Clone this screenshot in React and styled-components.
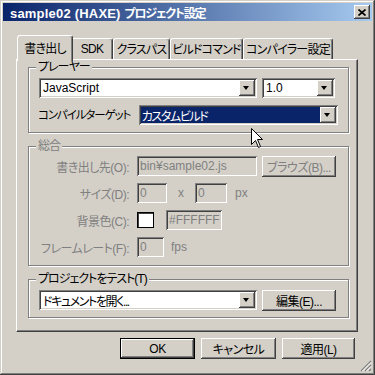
import React from "react";
import styled, { createGlobalStyle } from "styled-components";

const GlobalStyle = createGlobalStyle`
  html, body {
    margin: 0;
    padding: 0;
    background: #d4d0c8;
  }
  body {
    font-family: "Liberation Sans", "Noto Sans CJK JP", sans-serif;
    font-size: 12px;
    font-feature-settings: "palt" 1;
    color: #000;
  }
  * {
    box-sizing: border-box;
  }
`;

const raised = `
  box-shadow: inset -1px -1px #404040, inset 1px 1px #ffffff,
    inset -2px -2px #808080, inset 2px 2px #d4d0c8;
`;

const sunken = `
  box-shadow: inset 1px 1px #808080, inset -1px -1px #ffffff,
    inset 2px 2px #404040, inset -2px -2px #d4d0c8;
`;

const tabs = [
  { label: "書き出し", width: 56, active: true },
  { label: "SDK", width: 42 },
  { label: "クラスパス", width: 57 },
  { label: "ビルドコマンド", width: 73 },
  { label: "コンパイラー設定", width: 90 },
];

const App = () => {
  return (
    <>
      <GlobalStyle />
      <Window>
        <TitleBar>
          <Title>
            sample02 (HAXE) <TitleKana>プロジェクト設定</TitleKana>
          </Title>
          <CloseButton>
            <svg width="8" height="7" viewBox="0 0 8 7">
              <path d="M0.5 0.5 L7.5 6.5 M7.5 0.5 L0.5 6.5" stroke="#000" strokeWidth="1.7" />
            </svg>
          </CloseButton>
        </TitleBar>
        <Content>
          <TabStrip>
            {tabs.map((t) => (
              <Tab key={t.label} $active={t.active} $width={t.width}>
                {t.label}
              </Tab>
            ))}
          </TabStrip>
          <Panel>
            <Group>
              <Legend>プレーヤー</Legend>
              <Stack>
                <Row>
                  <Combo $width={218}>
                    <ComboText>JavaScript</ComboText>
                    <DropButton />
                  </Combo>
                  <Combo $width={73}>
                    <ComboText>1.0</ComboText>
                    <DropButton />
                  </Combo>
                </Row>
                <Row>
                  <RowLabel>コンパイルターゲット</RowLabel>
                  <Combo $width={200}>
                    <ComboText $selected $jp>カスタムビルド</ComboText>
                    <DropButton />
                  </Combo>
                </Row>
              </Stack>
            </Group>

            <Group>
              <Legend $disabled>総合</Legend>
              <FormGrid>
                <FieldLabel>書き出し先(O):</FieldLabel>
                <Row>
                  <Field $width={120}>bin¥sample02.js</Field>
                  <Button $width={74} $disabled>ブラウズ(B)...</Button>
                </Row>

                <FieldLabel>サイズ(D):</FieldLabel>
                <Row $gap={0}>
                  <Field $width={30}>0</Field>
                  <Unit $pad={11}>x</Unit>
                  <Field $width={32}>0</Field>
                  <Unit $pad={8}>px</Unit>
                </Row>

                <FieldLabel>背景色(C):</FieldLabel>
                <Row $gap={12}>
                  <Swatch />
                  <Field $width={56}>#FFFFFF</Field>
                </Row>

                <FieldLabel>フレームレート(F):</FieldLabel>
                <Row $gap={7}>
                  <Field $width={27}>0</Field>
                  <Unit>fps</Unit>
                </Row>
              </FormGrid>
            </Group>

            <Group>
              <Legend>プロジェクトをテスト(T)</Legend>
              <Row>
                <Combo $width={218}>
                  <ComboText $jp>ドキュメントを開く...</ComboText>
                  <DropButton />
                </Combo>
                <Button $width={74}>編集(E)...</Button>
              </Row>
            </Group>
          </Panel>

          <ButtonBar>
            <Button $width={75} $default>OK</Button>
            <Button $width={75}>キャンセル</Button>
            <Button $width={73}>適用(L)</Button>
          </ButtonBar>
        </Content>

        <SizeGrip width="12" height="12" viewBox="0 0 12 12">
          <path d="M11 1 L1 11 M11 5 L5 11 M11 9 L9 11" stroke="#808080" strokeWidth="1.2" />
          <path d="M11 2.5 L2.5 11 M11 6.5 L6.5 11" stroke="#ffffff" strokeWidth="1" />
        </SizeGrip>

        <Cursor width="13" height="21" viewBox="0 0 13 21">
          <path
            d="M0.5 0.5 L0.5 16.5 L4.5 12.5 L7.5 19.5 L9.5 18.5 L6.5 11.5 L11.5 11.5 Z"
            fill="#fff"
            stroke="#000"
            strokeWidth="1"
          />
        </Cursor>
      </Window>
    </>
  );
};

export default App;

const Window = styled.div`
  position: relative;
  width: 375px;
  height: 375px;
  padding: 3px;
  background: #d4d0c8;
  box-shadow: inset -1px -1px #404040, inset 1px 1px #d4d0c8,
    inset -2px -2px #808080, inset 2px 2px #ffffff;
`;

const TitleBar = styled.div`
  display: flex;
  align-items: center;
  justify-content: space-between;
  height: 18px;
  padding: 0 2px 0 7px;
  background: linear-gradient(to right, #0a246a, #a6caf0);
`;

const Title = styled.div`
  color: #fff;
  font-weight: bold;
  font-size: 13px;
  letter-spacing: 0.2px;
  white-space: nowrap;
`;

const TitleKana = styled.span`
  font-size: 12px;
  letter-spacing: -1.2px;
`;

const CloseButton = styled.div`
  display: flex;
  align-items: center;
  justify-content: center;
  width: 16px;
  height: 14px;
  background: #d4d0c8;
  ${raised}
`;

const Content = styled.div`
  display: flex;
  flex-direction: column;
  padding: 14px 14px 0 13px;
`;

const TabStrip = styled.div`
  position: relative;
  z-index: 1;
  display: flex;
  align-items: flex-end;
  height: 24px;
  padding-left: 3px;
`;

const Tab = styled.div`
  display: flex;
  align-items: center;
  justify-content: center;
  flex: none;
  width: ${(p) => p.$width}px;
  height: ${(p) => (p.$active ? 26 : 21)}px;
  margin: 0 ${(p) => (p.$active ? -2 : 0)}px ${(p) => (p.$active ? -2 : 0)}px;
  padding-bottom: ${(p) => (p.$active ? 3 : 1)}px;
  position: relative;
  z-index: ${(p) => (p.$active ? 2 : 1)};
  background: #d4d0c8;
  border-style: solid;
  border-width: 1px 1px 0 1px;
  border-color: #ffffff #404040 transparent #ffffff;
  border-radius: 3px 3px 0 0;
  box-shadow: inset -1px 0 #808080;
  white-space: nowrap;
  letter-spacing: -0.8px;
`;

const Panel = styled.div`
  display: flex;
  flex-direction: column;
  gap: 12px;
  width: 342px;
  padding: 7px 8px 13px 11px;
  border-style: solid;
  border-width: 1px;
  border-color: #ffffff #404040 #404040 #ffffff;
  box-shadow: inset -1px -1px #808080;
`;

const Group = styled.div`
  position: relative;
  padding: 10px 10px 7px 10px;
  border: 1px solid #808080;
  box-shadow: inset 1px 1px #ffffff, 1px 1px #ffffff;

  & + & {
    margin-top: 1px;
  }
`;

const Legend = styled.span`
  position: absolute;
  top: -8px;
  left: 7px;
  padding: 0 2px;
  background: #d4d0c8;
  line-height: 14px;
  letter-spacing: -1px;
  color: ${(p) => (p.$disabled ? "#808080" : "#000")};
  white-space: nowrap;
`;

const Stack = styled.div`
  display: flex;
  flex-direction: column;
  gap: 7px;
`;

const Row = styled.div`
  display: flex;
  align-items: center;
  gap: ${(p) => (p.$gap ?? 5)}px;
  height: 20px;
`;

const RowLabel = styled.span`
  width: 96px;
  margin: -3px 0 0 -1px;
  font-size: 11.5px;
  letter-spacing: -1.1px;
  white-space: nowrap;
`;

const Combo = styled.div`
  display: flex;
  width: ${(p) => p.$width}px;
  height: 20px;
  padding: 2px;
  background: #fff;
  ${sunken}
`;

const ComboText = styled.div`
  flex: 1;
  display: flex;
  align-items: center;
  padding-left: ${(p) => (p.$selected ? 1 : 2)}px;
  background: ${(p) => (p.$selected ? "#0a246a" : "transparent")};
  color: ${(p) => (p.$selected ? "#fff" : "#000")};
  letter-spacing: ${(p) => (p.$jp ? -1.4 : 0)}px;
  white-space: nowrap;
  overflow: hidden;
`;

const DropButton = styled.div`
  position: relative;
  width: 16px;
  height: 16px;
  background: #d4d0c8;
  ${raised}

  &::after {
    content: "";
    position: absolute;
    left: 4px;
    top: 6px;
    border-style: solid;
    border-width: 4px 3.5px 0 3.5px;
    border-color: #000 transparent transparent transparent;
  }
`;

const FormGrid = styled.div`
  display: grid;
  grid-template-columns: 91px auto;
  column-gap: 8px;
  row-gap: 7px;
  align-items: center;
  margin: -1px 0 0 -1px;
  padding-bottom: 1px;
`;

const FieldLabel = styled.span`
  color: #808080;
  text-align: right;
  letter-spacing: -0.5px;
  white-space: nowrap;
`;

const Field = styled.div`
  display: flex;
  align-items: center;
  width: ${(p) => p.$width}px;
  height: 20px;
  padding: 0 2px 0 3px;
  background: #d4d0c8;
  color: #808080;
  white-space: nowrap;
  overflow: hidden;
  ${sunken}
`;

const Unit = styled.span`
  color: #808080;
  padding: 0 ${(p) => p.$pad ?? 0}px;
`;

const Swatch = styled.div`
  width: 17px;
  height: 16px;
  background: #fff;
  border: 1px solid #000;
  box-shadow: inset 1px 1px #404040;
`;

const Button = styled.div`
  display: flex;
  align-items: center;
  justify-content: center;
  width: ${(p) => p.$width}px;
  height: 21px;
  background: #d4d0c8;
  color: ${(p) => (p.$disabled ? "#808080" : "#000")};
  letter-spacing: -0.5px;
  white-space: nowrap;
  border: ${(p) => (p.$default ? "1px solid #000" : "none")};
  ${raised}
`;

const ButtonBar = styled.div`
  display: flex;
  justify-content: flex-end;
  gap: 6px;
  margin-top: 6px;
  padding-right: 3px;
`;

const SizeGrip = styled.svg`
  position: absolute;
  right: 3px;
  bottom: 3px;
`;

const Cursor = styled.svg`
  position: absolute;
  left: 251px;
  top: 128px;
`;
